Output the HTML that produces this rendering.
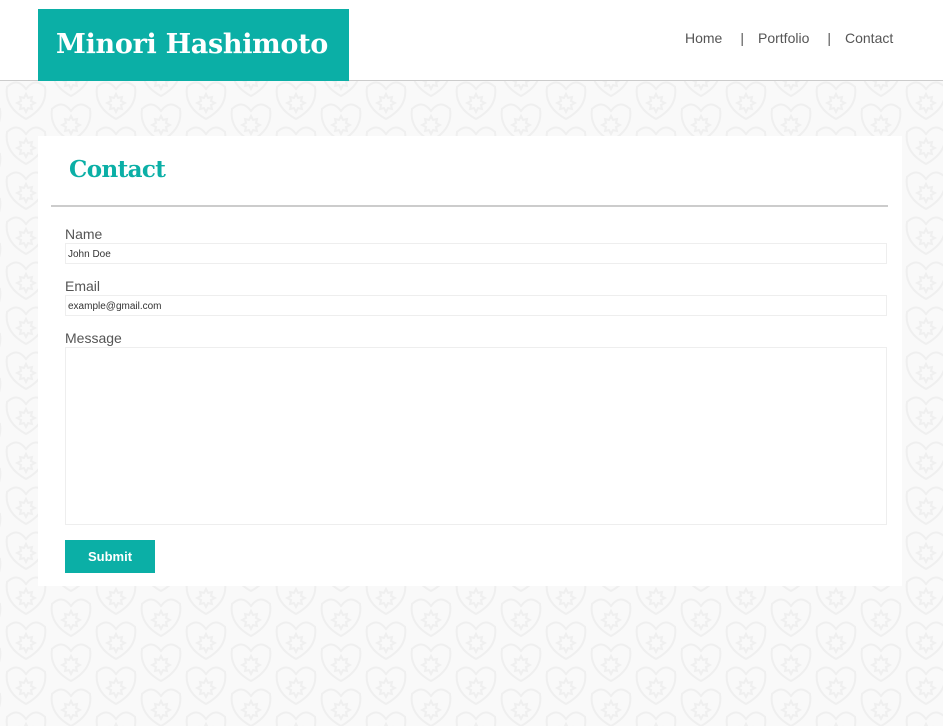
<!DOCTYPE html>
<html><head><meta charset="utf-8"><style>
*{margin:0;padding:0;box-sizing:border-box}
html,body{width:943px;height:726px;overflow:hidden;background:#f9f9f9;font-family:"Liberation Sans",Arial,sans-serif}
#bg{position:absolute;left:0;top:81px;width:943px;height:645px}
header{position:absolute;left:0;top:0;width:943px;height:81px;background:#fff;border-bottom:1px solid #ccc}
.logo{position:absolute;left:38px;top:9px;width:311px;height:72px;background:#0bafa6;color:#fff;font-family:"DejaVu Serif","Liberation Serif",serif;font-weight:bold;font-size:27px;line-height:72px;padding-left:18px;letter-spacing:-0.3px}
nav{position:absolute;top:30px;left:685px;font-size:14px;color:#555;white-space:nowrap}
nav span{display:inline-block}
.card{position:absolute;left:38px;top:136px;width:864px;height:450px;background:#fff}
h1{position:absolute;left:31px;top:20px;color:#0bafa6;font-family:"DejaVu Serif","Liberation Serif",serif;font-weight:bold;font-size:23px;letter-spacing:-0.6px}
.hr{position:absolute;left:13px;top:69px;width:837px;height:2px;background:#ccc}
label{position:absolute;left:27px;font-size:14px;color:#555}
.in{position:absolute;left:27px;width:822px;height:21px;border:1px solid #eee;font-size:10px;color:#333;padding:5px 0 0 2px}
.ta{position:absolute;left:27px;top:211px;width:822px;height:178px;border:1px solid #eee}
.btn{position:absolute;left:27px;top:404px;width:90px;height:33px;background:#0bafa6;color:#fff;font-size:13px;font-weight:bold;text-align:center;line-height:33px}
</style></head><body>
<svg id="bg" width="943" height="645"><defs>
<g id="s" fill="none" stroke="#efefef" stroke-width="2"><path d="M2 8 Q12 -2 21 10 Q30 -2 40 8 Q43 28 21 40 Q-1 28 2 8Z"/><path d="M21 15 l2 4 4-1-1 4 4 2-4 2 1 4-4-1-2 4-2-4-4 1 1-4-4-2 4-2-1-4 4 1z"/></g>
<pattern id="p" width="90" height="45" patternUnits="userSpaceOnUse" x="5" y="-2">
<use href="#s" x="0" y="0"/><use href="#s" x="45" y="22"/><use href="#s" x="45" y="-23"/><use href="#s" x="-45" y="22"/><use href="#s" x="-45" y="-23"/><use href="#s" x="0" y="45"/><use href="#s" x="90" y="0"/>
</pattern></defs><rect width="943" height="645" fill="url(#p)"/></svg>
<header><div class="logo">Minori Hashimoto</div>
<nav><span>Home</span><span style="margin:0 14px 0 18px">|</span><span>Portfolio</span><span style="margin:0 14px 0 18px">|</span><span>Contact</span></nav></header>
<div class="card">
<h1>Contact</h1><div class="hr"></div>
<label style="top:90px">Name</label><div class="in" style="top:107px">John Doe</div>
<label style="top:142px">Email</label><div class="in" style="top:159px">example@gmail.com</div>
<label style="top:194px">Message</label><div class="ta"></div>
<div class="btn">Submit</div>
</div>
</body></html>
